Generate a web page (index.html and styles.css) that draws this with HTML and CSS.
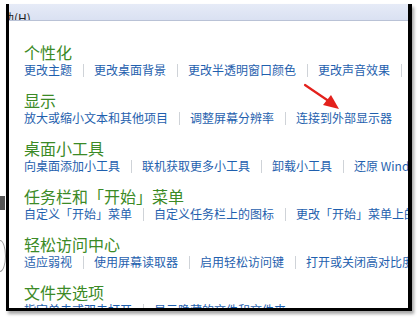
FILE: index.html
```html
<!DOCTYPE html>
<html lang="zh-CN">
<head>
<meta charset="utf-8">
<link rel="stylesheet" href="styles.css">
</head>
<body>
<div class="bg-mark dark"></div>
<div class="bg-mark ring"></div>
<div class="window">
  <div class="menubar"><span class="menu-item">助(H)</span></div>
  <div class="content">
    <section class="group">
      <h2 class="title">个性化</h2>
      <div class="links">
        <a class="link">更改主题</a><span class="sep"></span>
        <a class="link">更改桌面背景</a><span class="sep"></span>
        <a class="link">更改半透明窗口颜色</a><span class="sep"></span>
        <a class="link">更改声音效果</a><span class="sep"></span>
        <a class="link">更改屏幕保护程序</a>
      </div>
    </section>
    <section class="group">
      <h2 class="title">显示</h2>
      <div class="links">
        <a class="link">放大或缩小文本和其他项目</a><span class="sep"></span>
        <a class="link">调整屏幕分辨率</a><span class="sep"></span>
        <a class="link">连接到外部显示器</a>
      </div>
    </section>
    <section class="group">
      <h2 class="title">桌面小工具</h2>
      <div class="links">
        <a class="link">向桌面添加小工具</a><span class="sep"></span>
        <a class="link">联机获取更多小工具</a><span class="sep"></span>
        <a class="link">卸载小工具</a><span class="sep"></span>
        <a class="link">还原 Windows 安装的桌面小工具</a>
      </div>
    </section>
    <section class="group">
      <h2 class="title">任务栏和「开始」菜单</h2>
      <div class="links">
        <a class="link">自定义「开始」菜单</a><span class="sep"></span>
        <a class="link">自定义任务栏上的图标</a><span class="sep"></span>
        <a class="link">更改「开始」菜单上的图片</a>
      </div>
    </section>
    <section class="group">
      <h2 class="title">轻松访问中心</h2>
      <div class="links">
        <a class="link">适应弱视</a><span class="sep"></span>
        <a class="link">使用屏幕读取器</a><span class="sep"></span>
        <a class="link">启用轻松访问键</a><span class="sep"></span>
        <a class="link">打开或关闭高对比度</a>
      </div>
    </section>
    <section class="group">
      <h2 class="title">文件夹选项</h2>
      <div class="links">
        <a class="link">指定单击或双击打开</a><span class="sep"></span>
        <a class="link">显示隐藏的文件和文件夹</a>
      </div>
    </section>
  </div>
</div>
<svg class="arrow" width="50" height="40" viewBox="0 0 50 40">
  <line x1="2" y1="2" x2="30" y2="21" stroke="#e3211c" stroke-width="2.2" stroke-linecap="round"/>
  <polygon points="36,26 20,22 28,12" fill="#e3211c"/>
</svg>
</body>
</html>
```
FILE: styles.css
```css
html, body {
  margin: 0;
  padding: 0;
  background: #ffffff;
  width: 418px;
  height: 318px;
  overflow: hidden;
  position: relative;
  font-family: "Noto Sans CJK SC", "Noto Sans", sans-serif;
}

.window {
  margin: 4px 0 0 6px;
  width: 399px;
  height: 304px;
  border-left: 3px solid #000;
  border-right: 4px solid #000;
  border-bottom: 3px solid #000;
  box-shadow: 2px 3px 3px rgba(0, 0, 0, 0.35);
  background: #fff;
  overflow: hidden;
  display: flex;
  flex-direction: column;
}

.menubar {
  height: 16px;
  flex: none;
  background: linear-gradient(#e6ebf7, #dae1f2);
  border-bottom: 1px solid #b9c2d6;
  overflow: hidden;
  white-space: nowrap;
}

.menu-item {
  display: inline-block;
  margin-left: -7px;
  font-size: 12px;
  line-height: 14px;
  color: #222;
}

.content {
  padding: 21px 0 0 15px;
  display: flex;
  flex-direction: column;
  gap: 12px;
}

.group {
  display: flex;
  flex-direction: column;
}

.title {
  margin: 0;
  font-size: 16px;
  font-weight: normal;
  line-height: 20px;
  color: #3b8a26;
  white-space: nowrap;
}

.links {
  display: flex;
  align-items: center;
  height: 16px;
  white-space: nowrap;
}

.link {
  font-size: 12px;
  line-height: 16px;
  color: #1f5fae;
  flex: none;
}

.sep {
  flex: none;
  width: 1px;
  height: 13px;
  margin: 0 10px 0 11px;
  background: #cfd3d8;
}

.arrow {
  position: absolute;
  left: 303px;
  top: 83px;
}

.bg-mark {
  position: absolute;
  left: 0;
}

.bg-mark.dark {
  top: 196px;
  width: 5px;
  height: 14px;
  background: #555;
}

.bg-mark.ring {
  top: 240px;
  width: 10px;
  height: 30px;
  left: -6px;
  border: 1px solid #999;
  border-radius: 50%;
}
```
